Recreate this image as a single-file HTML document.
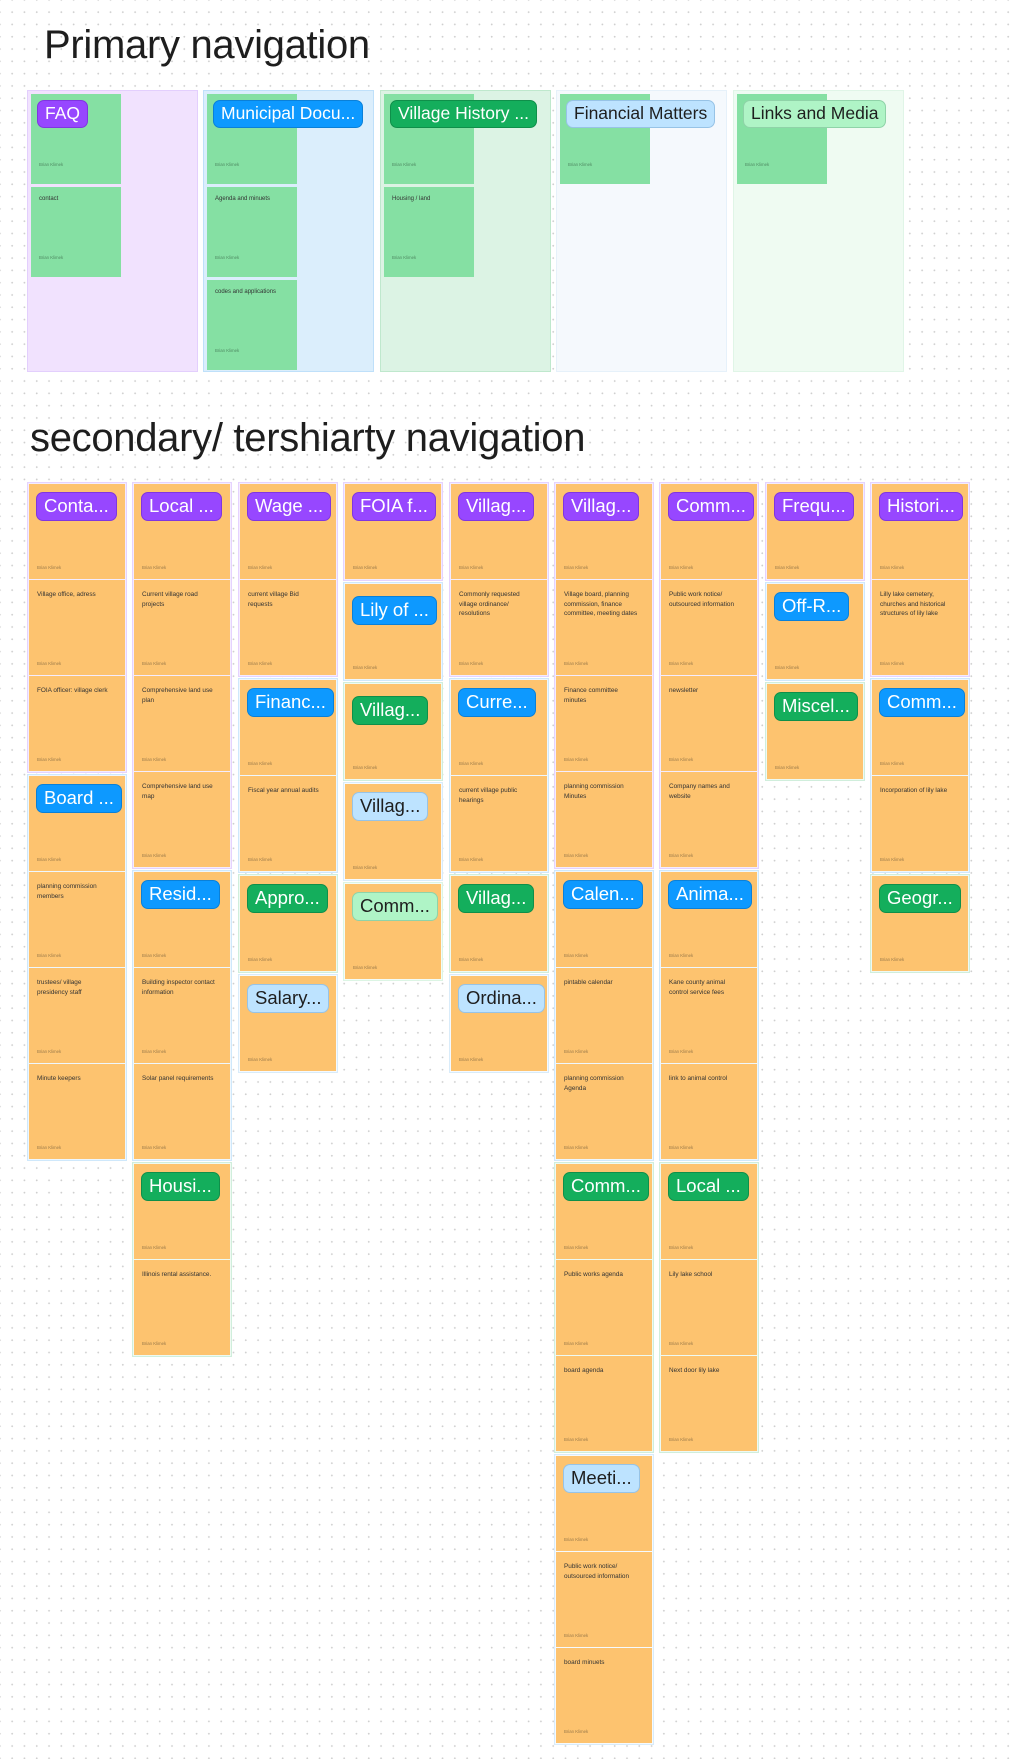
<!DOCTYPE html>
<html><head><meta charset="utf-8"><style>
*{box-sizing:border-box;margin:0;padding:0}
html,body{width:1018px;height:1759px;overflow:hidden}
body{position:relative;background-color:#fff;background-image:radial-gradient(circle,#cfcfcf 0.8px,transparent 1.1px);background-size:12.3px 12.3px;background-position:6px 6px;font-family:"Liberation Sans",Arial,sans-serif;color:#1e1e1e}
.t{position:absolute;font-size:40px;color:#1e1e1e;letter-spacing:-0.3px;white-space:nowrap}
.pf{position:absolute;top:90px;width:171px;height:282px;border:1px solid}
.pc{position:absolute;left:3px;width:90px;height:90px;background:#85e0a3}
.col{position:absolute;top:482px;width:100px}
.g{border:1px solid;padding:1px 1px 0;margin-bottom:1px;background:#fff}
.c{position:relative;width:96px;height:95px;margin-bottom:1px;background:#fdc36f}
.pu{border-color:#e5d3fe;background:#f4ecff}
.bl{border-color:#cfe8fb;background:#eef7fe}
.gr{border-color:#d0eedc;background:#eefaf2}
.lb{border-color:#d9ecfa;background:#f5faff}
.lg{border-color:#dcf5e4;background:#f3fcf6}
.tag{position:absolute;left:7px;top:8px;height:29px;line-height:26px;padding:0 7px;border-radius:7px;font-size:18.5px;color:#fff;white-space:nowrap;border:1.5px solid}
.tp{background:#9747ff;border-color:#7f36e0}
.tb{background:#0d99ff;border-color:#0a80d8}
.tg{background:#14ae5c;border-color:#0f8f4a}
.tl{background:#bde3ff;border-color:#97c3e6;color:#1e1e1e}
.tn{background:#aff4c6;border-color:#8fd3a8;color:#1e1e1e}
.txt{position:absolute;left:8px;top:10px;right:12px;font-size:6.4px;line-height:9.5px;color:#333}
.by{position:absolute;left:8px;top:81px;font-size:4.3px;color:#9a7a4a}
.pc .by{top:68px;color:#4f8a62}
.pc .txt{top:8px;font-size:6px}
.pc .tag{left:6px;top:6px;height:28px;line-height:25px;font-size:17.5px}
.ov{position:absolute;font-size:6.4px;color:#333}
</style></head><body>

<div class="t" style="left:44px;top:23px">Primary navigation</div>

<div class="pf" style="left:27px;background:#f1e2fe;border-color:#e3cffd">
 <div class="pc" style="top:3px"><div class="tag tp">FAQ</div><div class="by">Brian Klimek</div></div>
 <div class="pc" style="top:96px"><div class="txt">contact</div><div class="by">Brian Klimek</div></div>
</div>
<div class="pf" style="left:203px;background:#dbeefc;border-color:#bfe0fa">
 <div class="pc" style="top:3px"><div class="tag tb">Municipal Docu...</div><div class="by">Brian Klimek</div></div>
 <div class="pc" style="top:96px"><div class="txt">Agenda and minuets</div><div class="by">Brian Klimek</div></div>
 <div class="pc" style="top:189px"><div class="txt">codes and applications</div><div class="by">Brian Klimek</div></div>
</div>
<div class="pf" style="left:380px;background:#dcf3e4;border-color:#bfe8cd">
 <div class="pc" style="top:3px"><div class="tag tg">Village History ...</div><div class="by">Brian Klimek</div></div>
 <div class="pc" style="top:96px"><div class="txt">Housing / land</div><div class="by">Brian Klimek</div></div>
</div>
<div class="pf" style="left:556px;background:#f5f9fd;border-color:#e6f1fa">
 <div class="pc" style="top:3px"><div class="tag tl">Financial Matters</div><div class="by">Brian Klimek</div></div>
</div>
<div class="pf" style="left:733px;background:#effbf2;border-color:#e0f5e7">
 <div class="pc" style="top:3px"><div class="tag tn">Links and Media</div><div class="by">Brian Klimek</div></div>
</div>

<div class="t" style="left:30px;top:416px">secondary/ tershiarty navigation</div>

<!-- col1 -->
<div class="col" style="left:27px">
 <div class="g pu">
  <div class="c"><div class="tag tp">Conta...</div><div class="by">Brian Klimek</div></div>
  <div class="c"><div class="txt">Village office, adress</div><div class="by">Brian Klimek</div></div>
  <div class="c"><div class="txt">FOIA officer: village clerk</div><div class="by">Brian Klimek</div></div>
 </div>
 <div class="g bl">
  <div class="c"><div class="tag tb">Board ...</div><div class="by">Brian Klimek</div></div>
  <div class="c"><div class="txt">planning commission members</div><div class="by">Brian Klimek</div></div>
  <div class="c"><div class="txt">trustees/ village presidency staff</div><div class="by">Brian Klimek</div></div>
  <div class="c"><div class="txt">Minute keepers</div><div class="by">Brian Klimek</div></div>
 </div>
</div>

<!-- col2 -->
<div class="col" style="left:132px">
 <div class="g pu">
  <div class="c"><div class="tag tp">Local ...</div><div class="by">Brian Klimek</div></div>
  <div class="c"><div class="txt">Current village road projects</div><div class="by">Brian Klimek</div></div>
  <div class="c"><div class="txt">Comprehensive land use plan</div><div class="by">Brian Klimek</div></div>
  <div class="c"><div class="txt">Comprehensive land use map</div><div class="by">Brian Klimek</div></div>
 </div>
 <div class="g bl">
  <div class="c"><div class="tag tb">Resid...</div><div class="by">Brian Klimek</div></div>
  <div class="c"><div class="txt">Building inspector contact information</div><div class="by">Brian Klimek</div></div>
  <div class="c"><div class="txt">Solar panel requirements</div><div class="by">Brian Klimek</div></div>
 </div>
 <div class="g gr">
  <div class="c"><div class="tag tg">Housi...</div><div class="by">Brian Klimek</div></div>
  <div class="c"><div class="txt">Illinois rental assistance.</div><div class="by">Brian Klimek</div></div>
 </div>
</div>

<!-- col3 -->
<div class="col" style="left:238px">
 <div class="g pu">
  <div class="c"><div class="tag tp">Wage ...</div><div class="by">Brian Klimek</div></div>
  <div class="c"><div class="txt">current village Bid requests</div><div class="by">Brian Klimek</div></div>
 </div>
 <div class="g bl">
  <div class="c"><div class="tag tb">Financ...</div><div class="by">Brian Klimek</div></div>
  <div class="c"><div class="txt">Fiscal year annual audits</div><div class="by">Brian Klimek</div></div>
 </div>
 <div class="g gr">
  <div class="c"><div class="tag tg">Appro...</div><div class="by">Brian Klimek</div></div>
 </div>
 <div class="g lb">
  <div class="c"><div class="tag tl">Salary...</div><div class="by">Brian Klimek</div></div>
 </div>
</div>

<!-- col4 -->
<div class="col" style="left:343px">
 <div class="g pu">
  <div class="c"><div class="tag tp">FOIA f...</div><div class="by">Brian Klimek</div></div>
 </div>
 <div class="g bl">
  <div class="c"><div class="tag tb" style="top:12px">Lily of ...</div><div class="by">Brian Klimek</div></div>
 </div>
 <div class="g gr">
  <div class="c"><div class="tag tg" style="top:12px">Villag...</div><div class="by">Brian Klimek</div></div>
 </div>
 <div class="g lb">
  <div class="c"><div class="ov" style="left:72px;top:11px">ns</div><div class="tag tl">Villag...</div><div class="by">Brian Klimek</div></div>
 </div>
 <div class="g lg">
  <div class="c"><div class="tag tn">Comm...</div><div class="by">Brian Klimek</div></div>
 </div>
</div>

<!-- col5 -->
<div class="col" style="left:449px">
 <div class="g pu">
  <div class="c"><div class="tag tp">Villag...</div><div class="by">Brian Klimek</div></div>
  <div class="c"><div class="txt">Commonly requested village ordinance/ resolutions</div><div class="by">Brian Klimek</div></div>
 </div>
 <div class="g bl">
  <div class="c"><div class="tag tb">Curre...</div><div class="by">Brian Klimek</div></div>
  <div class="c"><div class="txt">current village public hearings</div><div class="by">Brian Klimek</div></div>
 </div>
 <div class="g gr">
  <div class="c"><div class="tag tg">Villag...</div><div class="by">Brian Klimek</div></div>
 </div>
 <div class="g lb">
  <div class="c"><div class="tag tl">Ordina...</div><div class="by">Brian Klimek</div></div>
 </div>
</div>

<!-- col6 -->
<div class="col" style="left:554px">
 <div class="g pu">
  <div class="c"><div class="ov" style="left:74px;top:7px">s</div><div class="tag tp">Villag...</div><div class="by">Brian Klimek</div></div>
  <div class="c"><div class="txt">Village board, planning commission, finance committee,  meeting dates</div><div class="by">Brian Klimek</div></div>
  <div class="c"><div class="txt">Finance committee minutes</div><div class="by">Brian Klimek</div></div>
  <div class="c"><div class="txt">planning commission Minutes</div><div class="by">Brian Klimek</div></div>
 </div>
 <div class="g bl">
  <div class="c"><div class="tag tb">Calen...</div><div class="by">Brian Klimek</div></div>
  <div class="c"><div class="txt">pintable calendar</div><div class="by">Brian Klimek</div></div>
  <div class="c"><div class="txt">planning commission Agenda</div><div class="by">Brian Klimek</div></div>
 </div>
 <div class="g gr">
  <div class="c"><div class="tag tg">Comm...</div><div class="by">Brian Klimek</div></div>
  <div class="c"><div class="txt">Public works agenda</div><div class="by">Brian Klimek</div></div>
  <div class="c"><div class="txt">board agenda</div><div class="by">Brian Klimek</div></div>
 </div>
 <div class="g lb">
  <div class="c"><div class="tag tl">Meeti...</div><div class="by">Brian Klimek</div></div>
  <div class="c"><div class="txt">Public work notice/ outsourced information</div><div class="by">Brian Klimek</div></div>
  <div class="c"><div class="txt">board minuets</div><div class="by">Brian Klimek</div></div>
 </div>
</div>

<!-- col7 -->
<div class="col" style="left:659px">
 <div class="g pu">
  <div class="c"><div class="tag tp">Comm...</div><div class="by">Brian Klimek</div></div>
  <div class="c"><div class="txt">Public work notice/ outsourced information</div><div class="by">Brian Klimek</div></div>
  <div class="c"><div class="txt">newsletter</div><div class="by">Brian Klimek</div></div>
  <div class="c"><div class="txt">Company names and website</div><div class="by">Brian Klimek</div></div>
 </div>
 <div class="g bl">
  <div class="c"><div class="tag tb">Anima...</div><div class="by">Brian Klimek</div></div>
  <div class="c"><div class="txt">Kane county animal control service fees</div><div class="by">Brian Klimek</div></div>
  <div class="c"><div class="txt">link to animal control</div><div class="by">Brian Klimek</div></div>
 </div>
 <div class="g gr">
  <div class="c"><div class="tag tg">Local ...</div><div class="by">Brian Klimek</div></div>
  <div class="c"><div class="txt">Lily lake school</div><div class="by">Brian Klimek</div></div>
  <div class="c"><div class="txt">Next door lily lake</div><div class="by">Brian Klimek</div></div>
 </div>
</div>

<!-- col8 -->
<div class="col" style="left:765px">
 <div class="g pu">
  <div class="c"><div class="tag tp">Frequ...</div><div class="by">Brian Klimek</div></div>
 </div>
 <div class="g bl">
  <div class="c"><div class="tag tb">Off-R...</div><div class="by">Brian Klimek</div></div>
 </div>
 <div class="g gr">
  <div class="c"><div class="tag tg">Miscel...</div><div class="by">Brian Klimek</div></div>
 </div>
</div>

<!-- col9 -->
<div class="col" style="left:870px">
 <div class="g pu">
  <div class="c"><div class="tag tp">Histori...</div><div class="by">Brian Klimek</div></div>
  <div class="c"><div class="txt">Lilly lake cemetery, churches and historical structures  of lily lake</div><div class="by">Brian Klimek</div></div>
 </div>
 <div class="g bl">
  <div class="c"><div class="tag tb">Comm...</div><div class="by">Brian Klimek</div></div>
  <div class="c"><div class="txt">Incorporation of lily lake</div><div class="by">Brian Klimek</div></div>
 </div>
 <div class="g gr">
  <div class="c"><div class="tag tg">Geogr...</div><div class="by">Brian Klimek</div></div>
 </div>
</div>

</body></html>
